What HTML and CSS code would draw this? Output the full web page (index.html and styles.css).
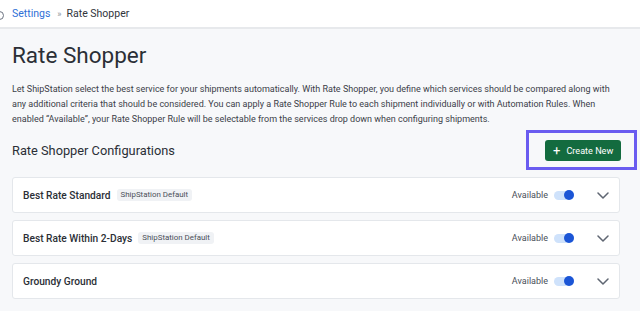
FILE: index.html
```html
<!DOCTYPE html>
<html>
<head>
<meta charset="utf-8">
<link rel="stylesheet" href="styles.css">
</head>
<body>
<header class="topbar">
  <span class="edge-icon"></span>
  <a class="crumb-link">Settings</a>
  <span class="crumb-sep">»</span>
  <span class="crumb-current">Rate Shopper</span>
</header>
<main class="page">
  <h1 class="title">Rate Shopper</h1>
  <p class="intro">Let ShipStation select the best service for your shipments automatically. With Rate Shopper, you define which services should be compared along with any additional criteria that should be considered. You can apply a Rate Shopper Rule to each shipment individually or with Automation Rules. When enabled “Available”, your Rate Shopper Rule will be selectable from the services drop down when configuring shipments.</p>
  <div class="section-head">
    <h2 class="section-title">Rate Shopper Configurations</h2>
    <div class="highlight">
      <button class="btn-create"><span class="plus">+</span>Create New</button>
    </div>
  </div>
  <div class="cards">
    <div class="card">
      <span class="card-title">Best Rate Standard</span>
      <span class="badge">ShipStation Default</span>
      <span class="spacer"></span>
      <span class="avail">Available</span>
      <span class="toggle"><span class="knob"></span></span>
      <svg class="chev" width="12" height="7" viewBox="0 0 12 7"><path d="M1 1l5 5 5-5" fill="none" stroke="#5f6672" stroke-width="1.5" stroke-linecap="round" stroke-linejoin="round"/></svg>
    </div>
    <div class="card">
      <span class="card-title">Best Rate Within 2-Days</span>
      <span class="badge">ShipStation Default</span>
      <span class="spacer"></span>
      <span class="avail">Available</span>
      <span class="toggle"><span class="knob"></span></span>
      <svg class="chev" width="12" height="7" viewBox="0 0 12 7"><path d="M1 1l5 5 5-5" fill="none" stroke="#5f6672" stroke-width="1.5" stroke-linecap="round" stroke-linejoin="round"/></svg>
    </div>
    <div class="card">
      <span class="card-title">Groundy Ground</span>
      <span class="spacer"></span>
      <span class="avail">Available</span>
      <span class="toggle"><span class="knob"></span></span>
      <svg class="chev" width="12" height="7" viewBox="0 0 12 7"><path d="M1 1l5 5 5-5" fill="none" stroke="#5f6672" stroke-width="1.5" stroke-linecap="round" stroke-linejoin="round"/></svg>
    </div>
  </div>
</main>
</body>
</html>
```
FILE: styles.css
```css
* { box-sizing: border-box; }
html, body { margin: 0; padding: 0; }
body {
  background: #f7f8fa;
  font-family: Roboto, "Liberation Sans", sans-serif;
  color: #2b2f36;
  width: 640px;
  height: 311px;
  overflow: hidden;
}
.topbar {
  height: 29px;
  background: #fff;
  border-bottom: 2px solid #e7e9ec;
  display: flex;
  align-items: center;
  padding-left: 12px;
  font-size: 10.5px;
  position: relative;
}
.edge-icon {
  position: absolute;
  left: -5px;
  top: 11px;
  width: 9px;
  height: 9px;
  border: 1px solid #6b7280;
  border-radius: 50%;
}
.crumb-link { color: #2f6fd6; }
.crumb-sep { color: #8a9099; margin: 0 5px 0 7px; font-size: 9px; }
.crumb-current { color: #30343b; }
.page { padding: 0 20px 0 12px; }
.title {
  font-size: 22.5px;
  font-weight: 400;
  margin: 14px 0 0;
  line-height: 24px;
  color: #2b2f36;
}
.intro {
  font-size: 9px;
  line-height: 15px;
  margin: 15px 0 0;
  color: #3b4048;
  width: 610px;
}
.section-head {
  display: flex;
  align-items: center;
  justify-content: space-between;
  margin-top: 3px;
}
.section-title {
  font-size: 12.8px;
  font-weight: 400;
  margin: 0;
  color: #2b2f36;
}
.highlight {
  border: 3px solid #6a5cf0;
  padding: 7px 13px 6px 16px;
  margin-right: -17px;
}
.btn-create {
  background: #136b3f;
  color: #fff;
  border: none;
  border-radius: 3px;
  height: 21px;
  width: 76px;
  padding: 0 0 0 8px;
  font-family: inherit;
  font-size: 9.1px;
  display: flex;
  align-items: center;
}
.plus { font-size: 13px; margin-right: 6px; line-height: 1; }
.cards {
  display: flex;
  flex-direction: column;
  gap: 7px;
  margin-top: 7px;
}
.card {
  background: #fff;
  border: 1px solid #e4e7eb;
  border-radius: 3px;
  height: 36px;
  display: flex;
  align-items: center;
  padding: 0 10px 0 10px;
}
.card-title {
  font-size: 10.2px;
  font-weight: 500;
  color: #2b2f36;
}
.badge {
  background: #f0f2f5;
  color: #4a5059;
  font-size: 7.9px;
  line-height: 10px;
  padding: 1px 4px;
  border-radius: 3px;
  margin-left: 6px;
}
.spacer { flex: 1; }
.avail { font-size: 9px; color: #4a5059; margin-right: 6px; }
.toggle {
  width: 20px;
  height: 9px;
  border-radius: 5px;
  background: #cfe2fb;
  position: relative;
  margin-right: 23px;
}
.knob {
  position: absolute;
  right: 0;
  top: -0.5px;
  width: 10px;
  height: 10px;
  border-radius: 50%;
  background: #1b55d6;
}
```
